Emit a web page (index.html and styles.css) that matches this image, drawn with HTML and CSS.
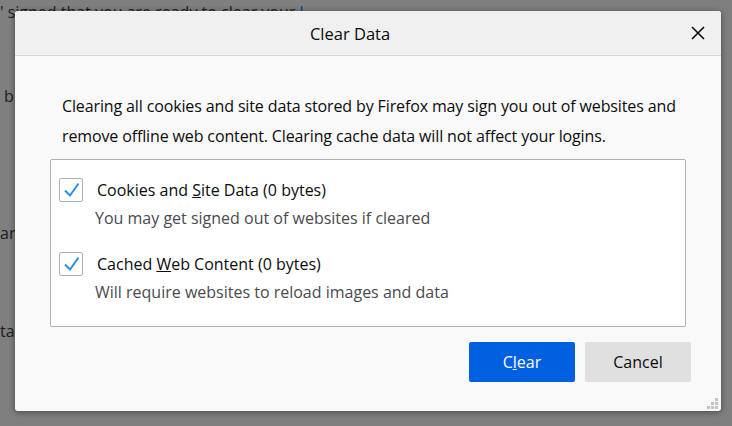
FILE: index.html
```html
<!DOCTYPE html>
<html>
<head>
<meta charset="utf-8">
<link rel="stylesheet" href="styles.css">
</head>
<body>
<div class="page">
  <p class="bg-line top">' signed that you are ready to clear your <span class="link">l</span></p>
  <p class="bg-line l1">b</p>
  <p class="bg-line l2">an</p>
  <p class="bg-line l3">ta</p>
</div>
<div class="dialog">
  <div class="header">
    <span class="title">Clear Data</span>
    <svg class="close" width="14" height="14" viewBox="0 0 14 14"><path d="M1 1L13 13M13 1L1 13" stroke="#0c0c0d" stroke-width="1.6" fill="none"/></svg>
  </div>
  <div class="body">
    <p class="intro">Clearing all cookies and site data stored by Firefox may sign you out of websites and remove offline web content. Clearing cache data will not affect your logins.</p>
    <div class="options">
      <div class="option">
        <div class="row">
          <span class="check"><svg width="24" height="24" viewBox="0 0 24 24"><path d="M6 12.5L11 17.5L19.5 5.5" stroke="#2b8ee6" stroke-width="2" fill="none"/></svg></span>
          <span class="label">Cookies and <u>S</u>ite Data (0 bytes)</span>
        </div>
        <div class="desc">You may get signed out of websites if cleared</div>
      </div>
      <div class="option">
        <div class="row">
          <span class="check"><svg width="24" height="24" viewBox="0 0 24 24"><path d="M6 12.5L11 17.5L19.5 5.5" stroke="#2b8ee6" stroke-width="2" fill="none"/></svg></span>
          <span class="label">Cached <u>W</u>eb Content (0 bytes)</span>
        </div>
        <div class="desc">Will require websites to reload images and data</div>
      </div>
    </div>
    <div class="buttons">
      <button class="btn primary">C<u>l</u>ear</button>
      <button class="btn">Cancel</button>
    </div>
  </div>
  <svg class="grip" width="12" height="12" viewBox="0 0 12 12"><g fill="#c4c4c4"><rect x="8" y="0" width="3" height="3"/><rect x="4" y="4" width="3" height="3"/><rect x="8" y="4" width="3" height="3"/><rect x="0" y="8" width="3" height="3"/><rect x="4" y="8" width="3" height="3"/><rect x="8" y="8" width="3" height="3"/></g></svg>
</div>
</body>
</html>
```
FILE: styles.css
```css
html, body {
  margin: 0;
  padding: 0;
  width: 732px;
  height: 426px;
  overflow: hidden;
  background: #7f7f7f;
  font-family: "Open Sans", "Noto Sans", sans-serif;
}
.page {
  display: flex;
  flex-direction: column;
  color: #1c1c1c;
  font-size: 16px;
  line-height: 20px;
}
.bg-line {
  margin: 0;
  white-space: nowrap;
}
.bg-line.top { margin-top: 2px; margin-left: 0; }
.link { color: #0a3d91; }
.bg-line.l1 { margin-top: 64px; margin-left: 4px; }
.bg-line.l2 { margin-top: 117px; margin-left: 0; }
.bg-line.l3 { margin-top: 78px; margin-left: 0; }

.dialog {
  position: absolute;
  left: 15px;
  top: 11px;
  width: 706px;
  height: 400px;
  background: #f9f9f9;
  border-radius: 3px;
  box-shadow: 0 1px 6px rgba(0,0,0,0.45);
  display: flex;
  flex-direction: column;
  overflow: hidden;
}
.header {
  height: 44px;
  background: #f0f0f0;
  border-bottom: 1px solid #d7d7d7;
  display: flex;
  align-items: center;
  justify-content: center;
  padding-right: 36px;
  position: relative;
  flex-shrink: 0;
}
.title {
  font-size: 16.5px;
  color: #0c0c0d;
}
.close {
  position: absolute;
  right: 16px;
  top: 15px;
}
.body {
  padding: 0 35px 0 35px;
  display: flex;
  flex-direction: column;
}
.intro {
  margin: 35px 0 0 12px;
  width: 630px;
  font-size: 16px;
  letter-spacing: -0.13px;
  line-height: 30px;
  color: #0c0c0d;
}
.options {
  margin-top: 8px;
  background: #fff;
  border: 1px solid #b1b1b3;
  border-radius: 2px;
  height: 168px;
  box-sizing: border-box;
  padding: 18px 0 0 8px;
  display: flex;
  flex-direction: column;
  gap: 23px;
}
.row {
  display: flex;
  align-items: center;
  height: 24px;
}
.check {
  width: 24px;
  height: 24px;
  box-sizing: border-box;
  border: 1px solid #b1b1b3;
  border-radius: 2px;
  background: #fff;
  display: flex;
}
.check svg { margin: -1px; }
.label {
  margin-left: 14px;
  font-size: 16px;
  color: #0c0c0d;
}
.desc {
  margin: 5px 0 0 36px;
  font-size: 16px;
  color: #4a4a4f;
  line-height: 22px;
}
.buttons {
  display: flex;
  justify-content: flex-end;
  gap: 10px;
  margin-top: 15px;
  margin-right: -5px;
}
.btn {
  width: 106px;
  height: 40px;
  border: none;
  border-radius: 2px;
  background: #e0e0e1;
  color: #0c0c0d;
  font-family: inherit;
  font-size: 16px;
  padding: 0;
}
.btn.primary {
  background: #0060df;
  color: #fff;
}
.grip {
  position: absolute;
  right: 2px;
  bottom: 1px;
}
```
